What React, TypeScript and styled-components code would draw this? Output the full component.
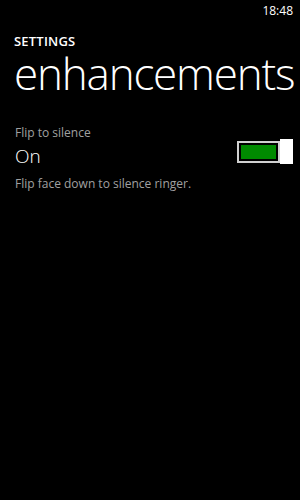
import styled, { createGlobalStyle } from 'styled-components';

const GlobalStyle = createGlobalStyle`
  html, body {
    margin: 0;
    padding: 0;
    background: #000;
  }
  body {
    font-family: 'Open Sans', 'Noto Sans', sans-serif;
    color: #fff;
  }
`;

const Screen = styled.div`
  width: 300px;
  height: 500px;
  background: #000;
  display: flex;
  flex-direction: column;
  overflow: hidden;
`;

const StatusBar = styled.div`
  height: 20px;
  display: flex;
  justify-content: flex-end;
  align-items: center;
  padding: 0 7px;
  font-size: 12px;
  color: #fff;
`;

const Header = styled.div`
  padding: 12px 0 0 14px;
`;

const AppTitle = styled.div`
  font-size: 13px;
  font-weight: 600;
  letter-spacing: 0.2px;
  line-height: 18px;
`;

const PageTitle = styled.h1`
  margin: 0;
  font-size: 44px;
  font-weight: 300;
  line-height: 46px;
  letter-spacing: -1.2px;
  white-space: nowrap;
`;

const Content = styled.div`
  padding: 29px 7px 0 15px;
`;

const Label = styled.div`
  font-size: 12px;
  color: #a0a0a0;
  line-height: 16px;
`;

const ToggleRow = styled.div`
  display: flex;
  justify-content: space-between;
  align-items: flex-start;
  margin-top: 2px;
`;

const Value = styled.div`
  font-size: 19px;
  font-weight: 300;
  line-height: 26px;
`;

const Toggle = styled.div`
  display: flex;
  align-items: center;
  margin-top: -4px;
`;

const Track = styled.div<{ $on: boolean }>`
  width: 43px;
  height: 22px;
  box-sizing: border-box;
  border: 2px solid #d0d0d0;
  padding: 2px;
  background: #000;
  div {
    width: 100%;
    height: 100%;
    background: ${(p) => (p.$on ? '#008a00' : '#000')};
  }
`;

const Thumb = styled.div`
  width: 13px;
  height: 25px;
  background: #fff;
`;

const Description = styled(Label)`
  margin-top: 7px;
`;

export default function App() {
  return (
    <Screen>
      <GlobalStyle />
      <StatusBar>18:48</StatusBar>
      <Header>
        <AppTitle>SETTINGS</AppTitle>
        <PageTitle>enhancements</PageTitle>
      </Header>
      <Content>
        <Label>Flip to silence</Label>
        <ToggleRow>
          <Value>On</Value>
          <Toggle>
            <Track $on>
              <div />
            </Track>
            <Thumb />
          </Toggle>
        </ToggleRow>
        <Description>Flip face down to silence ringer.</Description>
      </Content>
    </Screen>
  );
}
